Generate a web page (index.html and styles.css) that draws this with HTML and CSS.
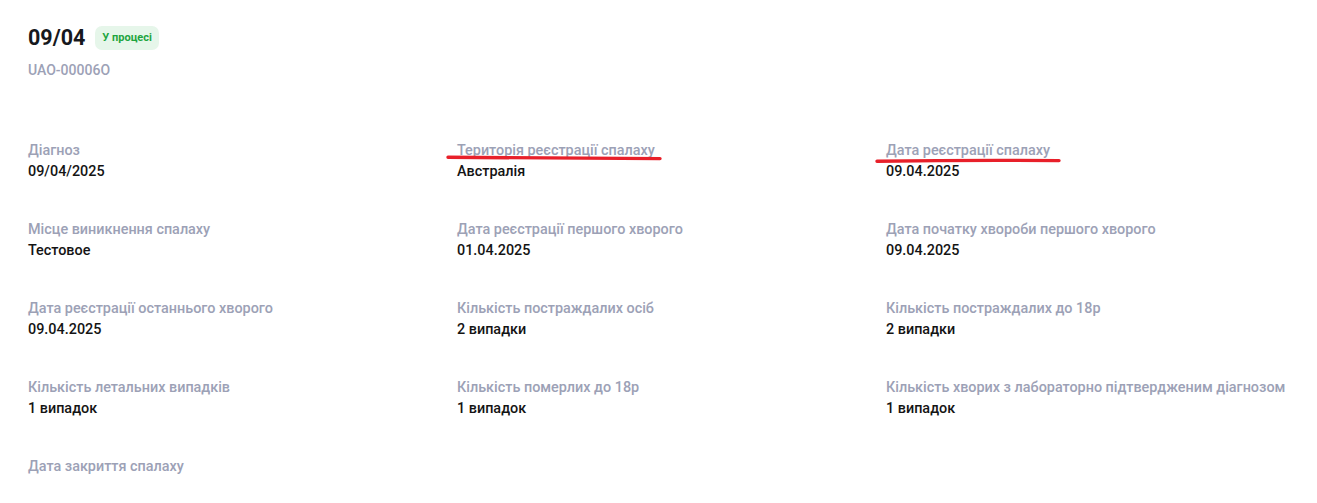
FILE: index.html
```html
<!DOCTYPE html>
<html lang="uk">
<head>
    <meta charset="UTF-8">
    <meta name="viewport" content="width=device-width, initial-scale=1.0">
    <title>Спалах 09/04</title>
    <link rel="stylesheet" href="styles.css">
</head>
<body>
    <div class="page">
        <div class="header">
            <div class="title-row">
                <h1 class="title">09/04</h1>
                <span class="status">У процесі</span>
            </div>
            <div class="code">UAO-00006O</div>
        </div>

        <div class="details">
            <div class="field">
                <div class="label">Діагноз</div>
                <div class="value">09/04/2025</div>
            </div>
            <div class="field">
                <div class="label">Територія реєстрації спалаху</div>
                <div class="value">Австралія</div>
            </div>
            <div class="field">
                <div class="label">Дата реєстрації спалаху</div>
                <div class="value">09.04.2025</div>
            </div>

            <div class="field">
                <div class="label">Місце виникнення спалаху</div>
                <div class="value">Тестовое</div>
            </div>
            <div class="field">
                <div class="label">Дата реєстрації першого хворого</div>
                <div class="value">01.04.2025</div>
            </div>
            <div class="field">
                <div class="label">Дата початку хвороби першого хворого</div>
                <div class="value">09.04.2025</div>
            </div>

            <div class="field">
                <div class="label">Дата реєстрації останнього хворого</div>
                <div class="value">09.04.2025</div>
            </div>
            <div class="field">
                <div class="label">Кількість постраждалих осіб</div>
                <div class="value">2 випадки</div>
            </div>
            <div class="field">
                <div class="label">Кількість постраждалих до 18р</div>
                <div class="value">2 випадки</div>
            </div>

            <div class="field">
                <div class="label">Кількість летальних випадків</div>
                <div class="value">1 випадок</div>
            </div>
            <div class="field">
                <div class="label">Кількість померлих до 18р</div>
                <div class="value">1 випадок</div>
            </div>
            <div class="field">
                <div class="label">Кількість хворих з лабораторно підтвердженим діагнозом</div>
                <div class="value">1 випадок</div>
            </div>

            <div class="field">
                <div class="label">Дата закриття спалаху</div>
                <div class="value"></div>
            </div>
        </div>
    </div>

    <!-- позначки червоним поверх сторінки -->
    <svg class="marks" width="1317" height="503" viewBox="0 0 1317 503">
        <path d="M448 157.3 Q554 157.6 660 158.6" />
        <path d="M877 161.2 Q968 160 1059 160.6" />
    </svg>
</body>
</html>
```

FILE: styles.css
```css
body {
    margin: 0;
    background-color: #ffffff;
    font-family: Roboto, "Noto Sans", Arial, sans-serif;
    color: #161616;
}
.page {
    padding: 24px 28px 20px 28px;
}
.header {
    margin-bottom: 61px;
}
.title-row {
    display: flex;
    align-items: center;
    gap: 10px;
}
.title {
    margin: 0;
    font-size: 21.5px;
    line-height: 28px;
    font-weight: 700;
    color: #16181d;
}
.status {
    display: inline-block;
    padding: 0 7px;
    height: 24px;
    line-height: 24px;
    font-size: 11px;
    font-weight: 700;
    color: #1ea53f;
    background-color: #e6f6ea;
    border-radius: 7px;
}
.code {
    margin-top: 8px;
    font-size: 14px;
    line-height: 20px;
    font-weight: 500;
    color: #9ca1b6;
}
/* сітка з полями спалаху */
.details {
    display: grid;
    grid-template-columns: repeat(3, 1fr);
    column-gap: 26px;
    row-gap: 38px;
}
.label {
    font-size: 14.4px;
    line-height: 20px;
    font-weight: 500;
    color: #9ca1b6;
    margin-bottom: 1px;
}
.value {
    font-size: 14.4px;
    line-height: 20px;
    font-weight: 500;
    color: #141414;
    min-height: 20px;
}
.marks {
    position: absolute;
    top: 0;
    left: 0;
    pointer-events: none;
}
.marks path {
    fill: none;
    stroke: #e8202a;
    stroke-width: 3.4;
    stroke-linecap: round;
}
```
